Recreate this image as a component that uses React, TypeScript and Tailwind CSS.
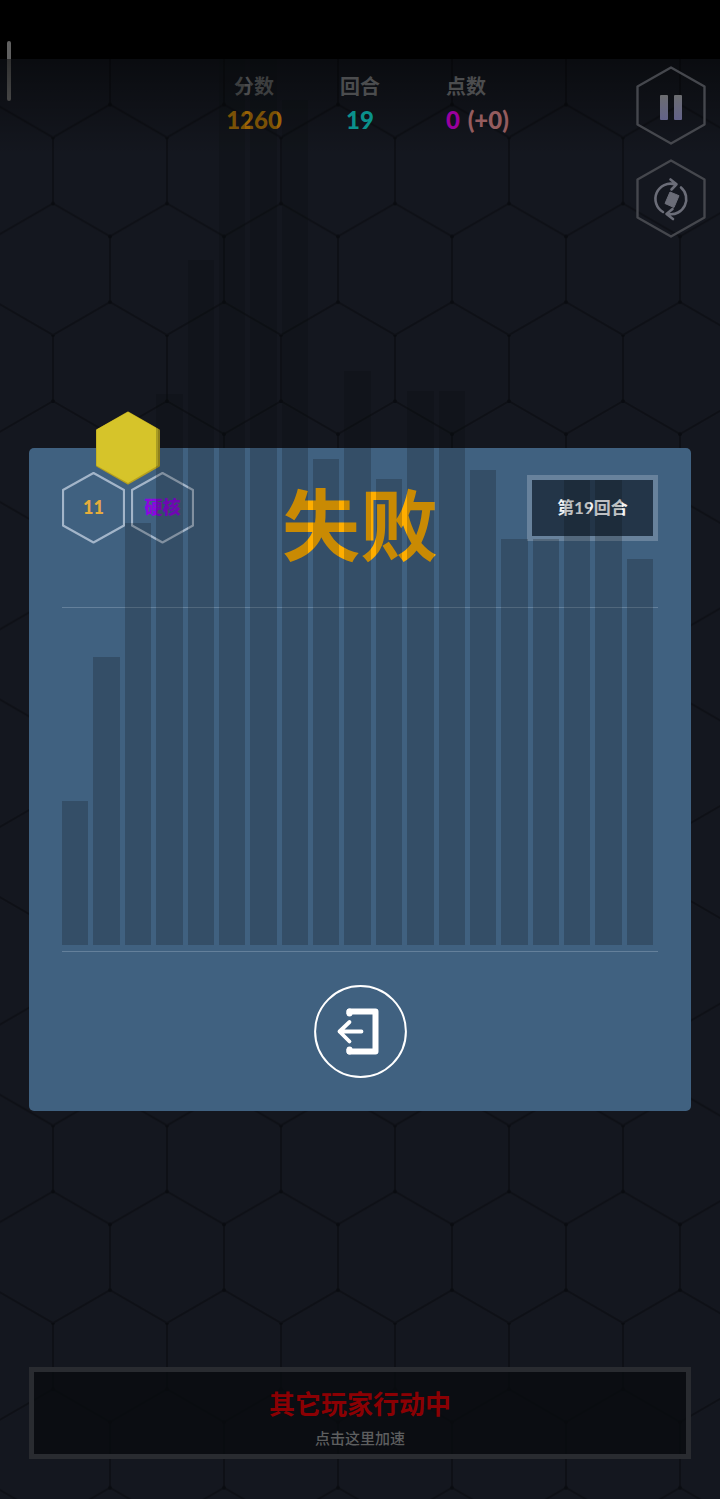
import type { ReactNode } from "react";

const barHeights = [144, 288, 422, 551, 685, 900, 900, 845, 486, 574, 466, 554, 554, 475, 406, 406, 465, 465, 386];

interface StatProps {
  label: string;
  children: ReactNode;
  align?: string;
}

function Stat({ label, children, align = "items-center" }: StatProps) {
  return (
    <div className="flex w-[106px] justify-center">
      <div className={`flex w-10 flex-col gap-1 whitespace-nowrap ${align}`}>
        <span className="text-[20px] leading-7 font-bold text-[#4b4c4e]">{label}</span>
        <span className="text-[24px] leading-8 font-black">{children}</span>
      </div>
    </div>
  );
}

function HexButton({ label, children }: { label: string; children: ReactNode }) {
  return (
    <button type="button" aria-label={label} className="h-[79px] w-[70px]">
      <svg viewBox="0 0 70 79" className="h-full w-full" fill="none">
        <path d="M35 1.5 68.5 20.5V58.5L35 77.5 1.5 58.5V20.5Z" stroke="#45474d" strokeWidth="2.4" strokeLinejoin="round" />
        {children}
      </svg>
    </button>
  );
}

function HexBadge({ children, color }: { children: ReactNode; color: string }) {
  return (
    <div className="relative flex h-[72px] w-[63px] items-center justify-center">
      <svg viewBox="0 0 63 72" className="absolute inset-0" fill="none">
        <path d="M31.5 1 62 18V53.5L31.5 70.5 1 53.5V18Z" stroke="#a3b5c9" strokeWidth="2.2" strokeLinejoin="round" />
      </svg>
      <span className={`relative text-[18px] font-black ${color}`}>{children}</span>
    </div>
  );
}

function HexBackground() {
  return (
    <svg className="absolute inset-0 h-full w-full" aria-hidden="true">
      <defs>
        <pattern id="hex" width="114" height="197.6" patternUnits="userSpaceOnUse" patternTransform="translate(53 78.5)">
          <path d="M0 0V66L57 99V164.6L0 197.6M57 164.6 114 197.6M114 0V66L57 99" fill="none" stroke="#0e1016" strokeWidth="2" />
          <g fill="#0a0c11">
            <circle cx="0" cy="0" r="2" />
            <circle cx="114" cy="0" r="2" />
            <circle cx="0" cy="66" r="2" />
            <circle cx="114" cy="66" r="2" />
            <circle cx="57" cy="99" r="2" />
            <circle cx="57" cy="164.6" r="2" />
          </g>
        </pattern>
        <linearGradient id="shade" x1="0" y1="0" x2="0" y2="1">
          <stop offset="0" stopColor="#000" stopOpacity="0.5" />
          <stop offset="1" stopColor="#000" stopOpacity="0" />
        </linearGradient>
      </defs>
      <rect width="100%" height="100%" fill="url(#hex)" />
      <rect width="100%" height="96" fill="url(#shade)" />
    </svg>
  );
}

export default function App() {
  return (
    <div className="relative flex min-h-screen flex-col bg-[#14171f] font-['Lato','Noto_Sans_CJK_SC',sans-serif]">
      <div className="h-[59px] bg-black" />
      <div className="absolute top-[41px] left-[7px] h-[60px] w-1 rounded-full bg-[#606060]" />

      <main className="relative grid flex-1 grid-rows-[1fr_auto_1fr] overflow-hidden">
        <HexBackground />

        {/* Score bar */}
        <header className="relative grid grid-cols-[1fr_auto_1fr] items-start px-3.5">
          <div className="col-start-2 flex pt-[13px]">
            <Stat label="分数">
              <span className="text-[#9a6405]">1260</span>
            </Stat>
            <Stat label="回合">
              <span className="text-[#0b918c]">19</span>
            </Stat>
            <Stat label="点数" align="items-start">
              <span className="text-[#9a009d]">0</span> <span className="ml-0.5 text-[#945c5e]">(+0)</span>
            </Stat>
          </div>
          <div className="flex flex-col items-end gap-3.5 pt-[7px]">
            <HexButton label="暂停">
              <defs>
                <linearGradient id="pause" x1="0" y1="0" x2="0" y2="1">
                  <stop offset="0" stopColor="#6c6d70" />
                  <stop offset="1" stopColor="#62628a" />
                </linearGradient>
              </defs>
              <rect x="24" y="29" width="8" height="25" rx="1" fill="url(#pause)" />
              <rect x="38" y="29" width="8" height="25" rx="1" fill="url(#pause)" />
            </HexButton>
            <HexButton label="旋转">
              <g stroke="#6b6d78" strokeWidth="2.6" strokeLinecap="round" strokeLinejoin="round">
                <path d="M27 53A15.2 15.2 0 0 1 39 25.3M34.5 20.5 40.5 25.3 35.5 30.5" />
                <path d="M45 28.5A15.2 15.2 0 0 1 32.5 55M36.5 50 30.5 55 37 60" />
              </g>
              <path d="M34 33 43 36.7 38 48.5 29 44.5Z" fill="#6b6d78" stroke="#6b6d78" strokeLinejoin="round" />
            </HexButton>
          </div>
        </header>

        {/* Result panel */}
        <section className="relative mx-[29px] rounded-[5px] bg-[#406180] px-[33px]">
          <div className="grid h-[159px] grid-cols-[1fr_auto_1fr] pt-6">
            <div className="relative flex h-[72px] gap-1.5">
              <HexBadge color="text-[#e5ac3c]">11</HexBadge>
              <HexBadge color="text-[#8c06e0]">硬核</HexBadge>
              <svg viewBox="0 0 64 74" className="absolute -top-[61px] left-[34px] h-[74px] w-16" aria-hidden="true">
                <path d="M32 2 62.5 19.5V54.5L32 72 1.5 54.5V19.5Z" fill="#b5a01e" stroke="#b5a01e" strokeWidth="3" strokeLinejoin="round" />
                <path d="M32 2 61 18.5V54L32 71 1.5 54V19Z" fill="#d6c42a" stroke="#d6c42a" strokeWidth="2" strokeLinejoin="round" />
              </svg>
            </div>
            <h1 className="text-[78px] leading-[106px] font-bold text-[#ffae00]">失败</h1>
            <button
              type="button"
              className="mt-[3px] h-[66px] w-[131px] justify-self-end border-[5px] border-[#68829c] bg-[#233548] text-[17px] font-bold text-[#f1f3f5]"
            >
              第19回合
            </button>
          </div>

          {/* Bars grow past the panel and darken whatever they cross */}
          <div className="pointer-events-none relative z-10 flex h-[345px] items-end border-y border-[#64809b] pb-1.5">
            {barHeights.map((height, i) => (
              <div key={i} className="mr-[5px] flex-1 bg-[#080c0c]/22" style={{ height }} />
            ))}
          </div>

          <div className="flex justify-center py-[33px]">
            <button type="button" aria-label="退出" className="h-[93px] w-[93px]">
              <svg viewBox="0 0 93 93" className="h-full w-full" fill="none" stroke="#fff" strokeLinecap="round" strokeLinejoin="round">
                <circle cx="46.5" cy="46.5" r="45.4" strokeWidth="2" />
                <path d="M35.5 29V26.5H61.5V66.5H35.5V64" strokeWidth="6" strokeLinecap="butt" />
                <path d="M35.5 28.5V26.5M35.5 66.5V64.5" strokeWidth="6" />
                <path d="M47.5 46.5H25.5M35.5 37 25.5 46.5 35.5 56.5" strokeWidth="3.8" />
              </svg>
            </button>
          </div>
        </section>

        {/* Turn status */}
        <footer className="relative flex items-end px-[29px] pb-10">
          <button
            type="button"
            className="flex h-[92px] w-full flex-col items-center justify-end border-[5px] border-[#292b30] bg-[#090b0f]/80"
          >
            <span className="text-[26px] leading-9 font-bold text-[#8b0003]">其它玩家行动中</span>
            <span className="text-[15px] leading-8 font-medium text-[#5d5e5f]">点击这里加速</span>
          </button>
        </footer>
      </main>
    </div>
  );
}
